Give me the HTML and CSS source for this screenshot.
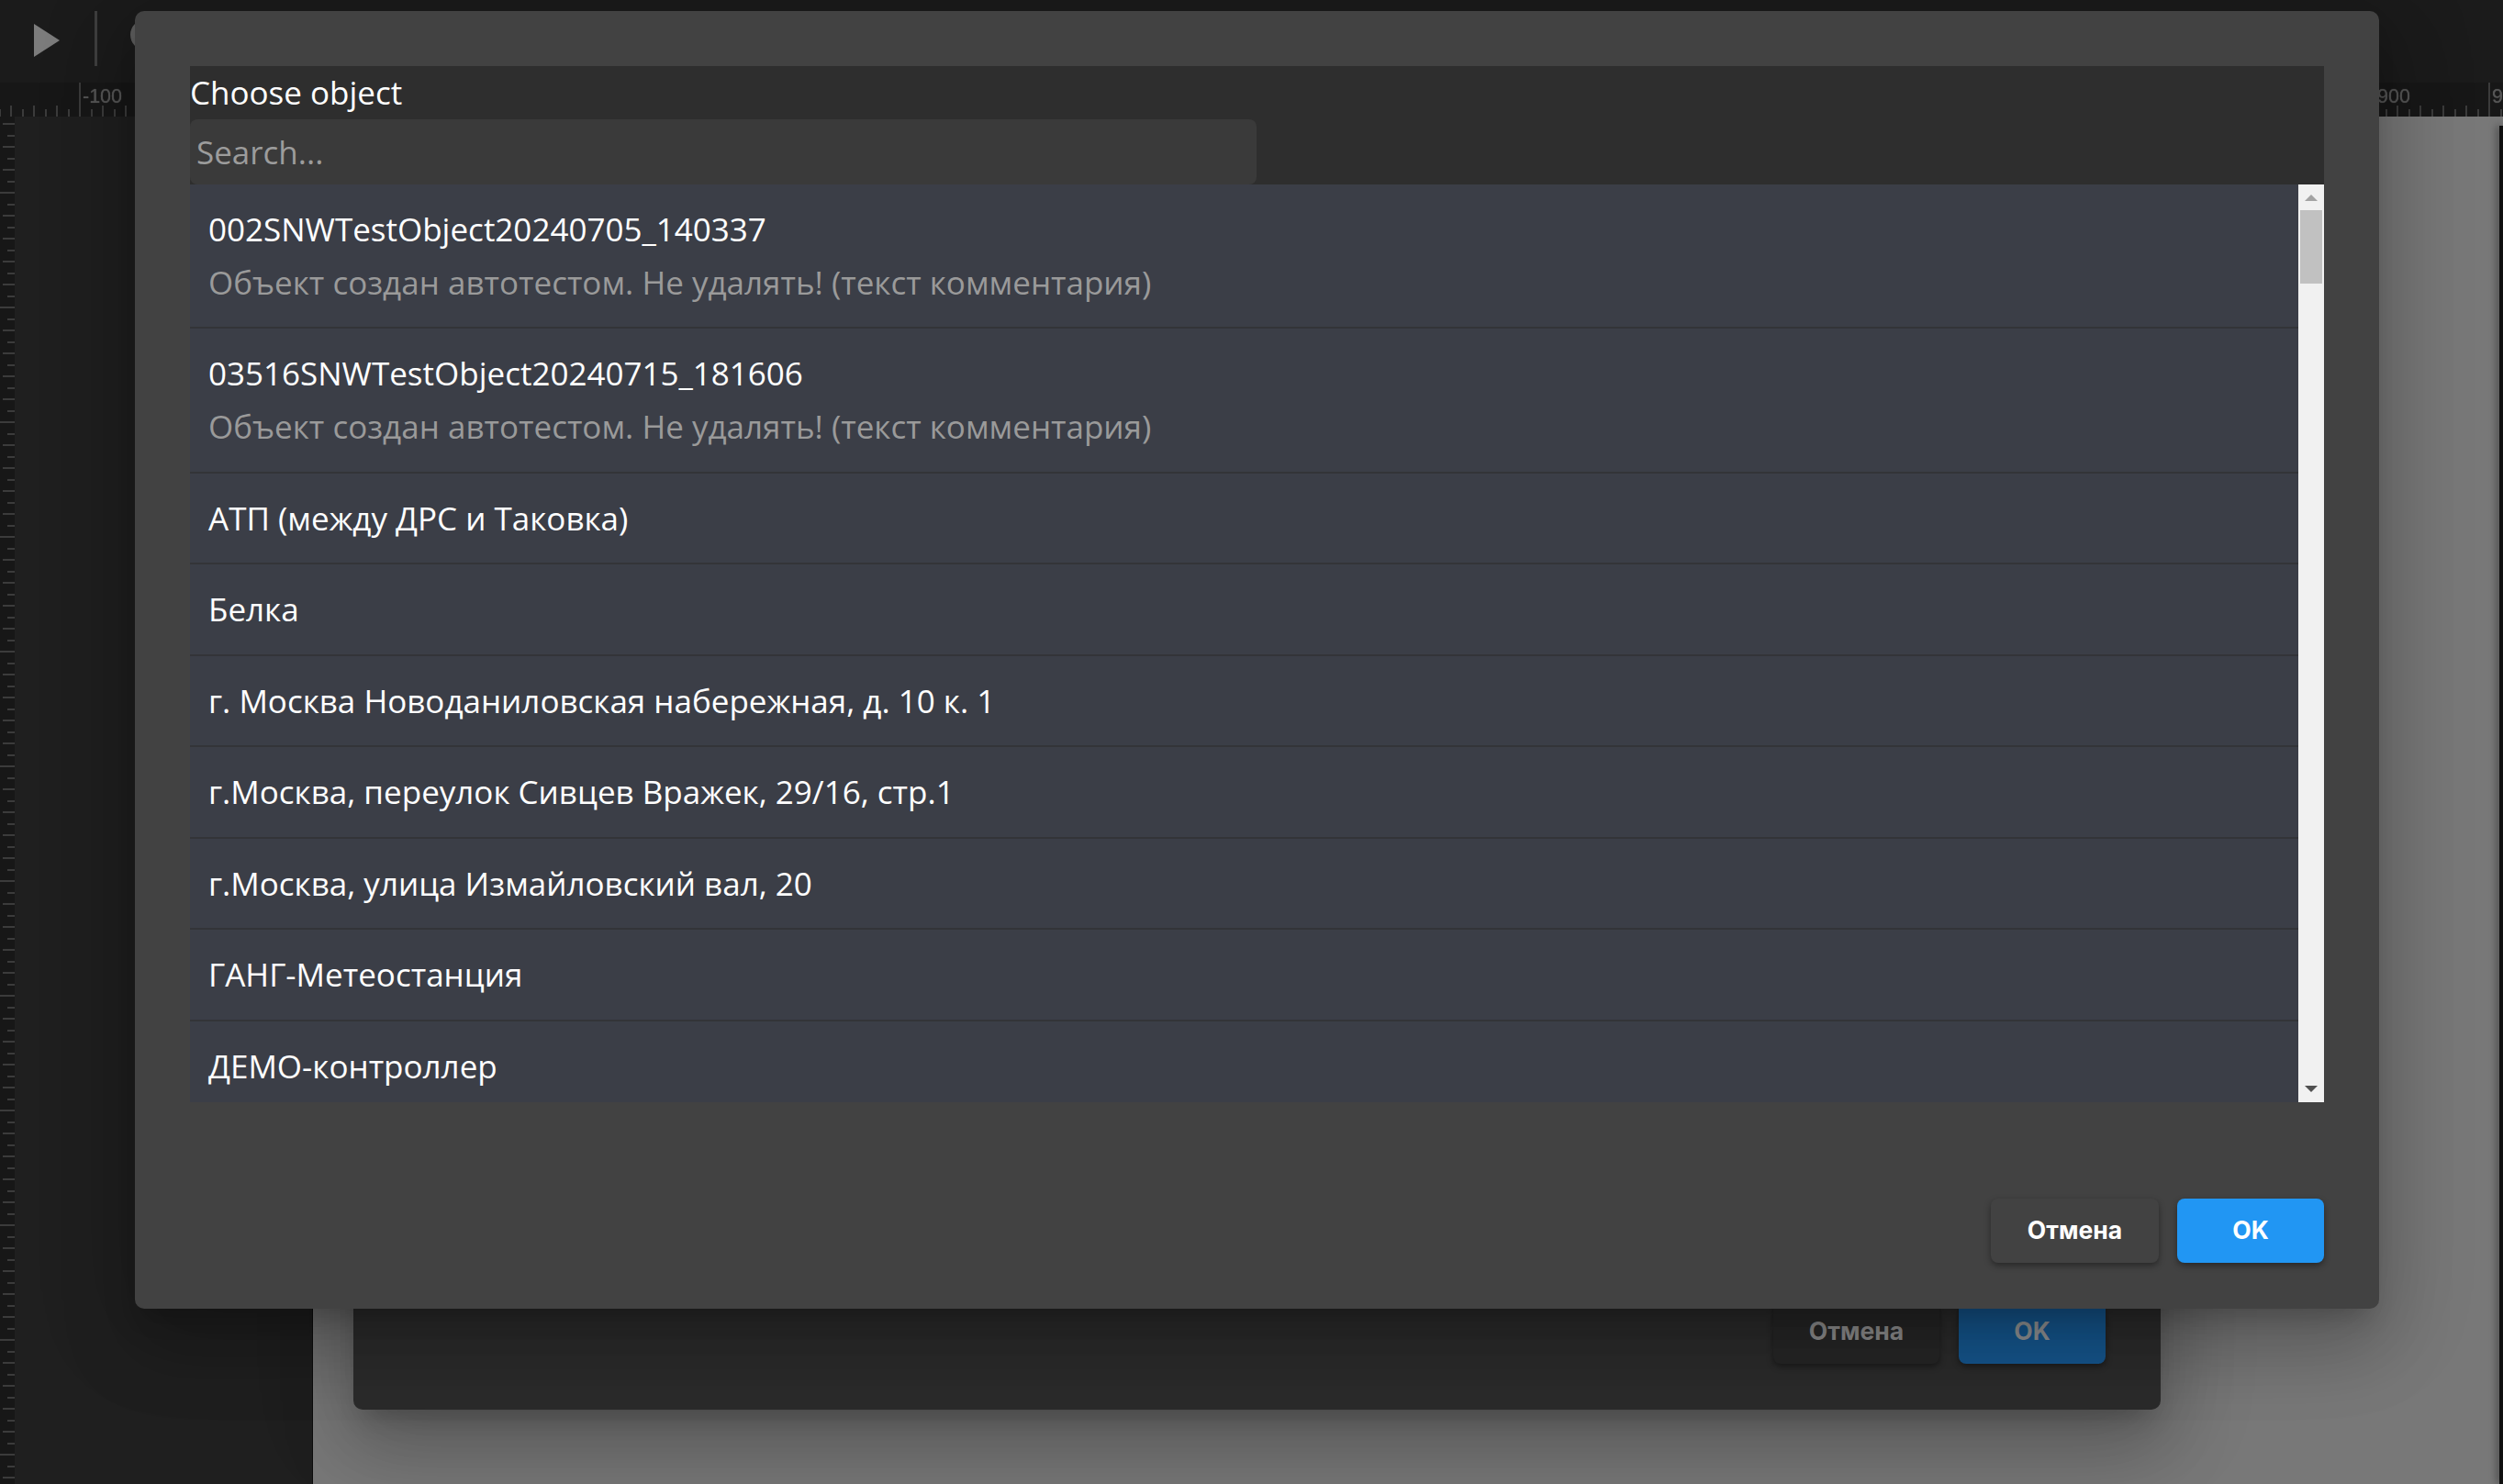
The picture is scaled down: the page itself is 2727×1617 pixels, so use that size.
FILE: index.html
```html
<!DOCTYPE html>
<html lang="ru">
<head>
<meta charset="utf-8">
<title>Choose object</title>
<link rel="stylesheet" href="styles.css">
</head>
<body>
<div class="app">
  <header class="toolbar">
    <svg class="play" viewBox="0 0 28 36" aria-hidden="true"><path d="M0 0 L28 18 L0 36 Z"/></svg>
    <span class="divider"></span>
    <span class="tool-circle"></span>
  </header>
  <div class="ruler-top">
    <span class="ruler-label label-a">-100</span>
    <span class="ruler-label label-b">900</span>
    <span class="ruler-label label-c">9</span>
  </div>
  <main class="workspace">
    <div class="ruler-left"></div>
    <aside class="side-panel"></aside>
    <section class="canvas"><div class="page-edge"></div></section>
  </main>
</div>

<div class="dialog-back">
  <div class="actions actions-dim">
    <button class="btn btn-cancel-dim">Отмена</button>
    <button class="btn btn-ok-dim">OK</button>
  </div>
</div>

<div class="modal">
  <div class="picker-head">
    <div class="picker-title">Choose object</div>
    <input class="search" type="text" placeholder="Search...">
  </div>
  <div class="picker-body">
    <ul class="list">
      <li class="row"><div class="row-title">002SNWTestObject20240705_140337</div><div class="row-note">Объект создан автотестом. Не удалять! (текст комментария)</div></li>
      <li class="row"><div class="row-title">03516SNWTestObject20240715_181606</div><div class="row-note">Объект создан автотестом. Не удалять! (текст комментария)</div></li>
      <li class="row"><div class="row-title">АТП (между ДРС и Таковка)</div></li>
      <li class="row"><div class="row-title">Белка</div></li>
      <li class="row"><div class="row-title">г. Москва Новоданиловская набережная, д. 10 к. 1</div></li>
      <li class="row"><div class="row-title">г.Москва, переулок Сивцев Вражек, 29/16, стр.1</div></li>
      <li class="row"><div class="row-title">г.Москва, улица Измайловский вал, 20</div></li>
      <li class="row"><div class="row-title">ГАНГ-Метеостанция</div></li>
      <li class="row"><div class="row-title">ДЕМО-контроллер</div></li>
    </ul>
    <div class="scrollbar">
      <span class="arrow-up"></span>
      <span class="thumb"></span>
      <span class="arrow-down"></span>
    </div>
  </div>
  <div class="actions modal-actions">
    <button class="btn btn-cancel">Отмена</button>
    <button class="btn btn-ok">OK</button>
  </div>
</div>
</body>
</html>
```
FILE: styles.css
```css
* { box-sizing: border-box; }
html, body { margin: 0; height: 100%; overflow: hidden; background: #1f1f1f; }
body { font-family: "Open Sans", "Noto Sans", sans-serif; color: #fff; }

.app { display: flex; flex-direction: column; height: 1617px; }

.toolbar {
  display: flex; align-items: flex-start; height: 90px; flex: none;
  padding: 12px 0 0 37px; background: #1b1b1b;
}
.play { width: 28px; height: 36px; margin-top: 14px; fill: #7c7c7c; }
.divider { width: 3px; height: 60px; margin-left: 38px; background: #3f3f3f; }
.tool-circle { width: 34px; height: 34px; margin: 9px 0 0 36px; border-radius: 50%; background: #5e5e5e; }

.ruler-top {
  position: relative; height: 37px; flex: none; overflow: hidden; background-color: #171717;
  background-image:
    linear-gradient(to right, #3b3b3b 2px, transparent 2px),
    linear-gradient(to right, #3b3b3b 2px, transparent 2px),
    linear-gradient(to right, #3b3b3b 2px, transparent 2px);
  background-repeat: repeat-x;
  background-size: 125px 100%, 25px 12px, 25px 8px;
  background-position: 86px 0, 36px 100%, 24px 100%;
}
.ruler-label {
  position: absolute; top: 2px; font: 21.5px/26px "Liberation Sans", sans-serif;
  color: #565656; filter: blur(.5px); text-shadow: 0 0 1px #565656;
}
.label-a { left: 90px; }
.label-b { left: 2590px; }
.label-c { left: 2715px; }

.workspace { display: flex; flex: 1; min-height: 0; }
.ruler-left {
  width: 16px; flex: none; background-color: #171717;
  background-image:
    linear-gradient(#3b3b3b 2px, transparent 2px),
    linear-gradient(#3b3b3b 2px, transparent 2px),
    linear-gradient(#3b3b3b 2px, transparent 2px);
  background-repeat: repeat-y;
  background-size: 16px 125px, 13px 25px, 8px 25px;
  background-position: 0 82px, 3px 7px, 8px 20px;
}
.side-panel { width: 325px; flex: none; background: #1f1f1f; border-right: 1px solid #0e0e0e; }
.canvas { flex: 1; display: flex; justify-content: flex-end; padding-top: 10px; background: #787878; }
.page-edge { width: 4px; background: #0f0f0f; box-shadow: -2px 0 8px rgba(0, 0, 0, .6); }

.dialog-back {
  position: absolute; left: 385px; top: 300px; width: 1969px; height: 1236px;
  display: flex; flex-direction: column; justify-content: flex-end;
  padding: 0 60px 50px 0; background: #2b2b2b; border-radius: 10px;
  box-shadow: 0 19px 26px -12px rgba(0, 0, 0, .2), 0 42px 80px 5px rgba(0, 0, 0, .16), 0 16px 100px 14px rgba(0, 0, 0, .14);
}

.modal {
  position: absolute; left: 147px; top: 12px; width: 2445px; height: 1414px;
  display: flex; flex-direction: column; padding: 60px 60px 50px 60px;
  background: #424242; border-radius: 10px;
  box-shadow: 0 19px 26px -12px rgba(0, 0, 0, .2), 0 42px 80px 5px rgba(0, 0, 0, .16), 0 16px 100px 14px rgba(0, 0, 0, .14);
}
.picker-head { flex: none; height: 129px; background: #2e2e2e; }
.picker-title { height: 58px; font-size: 35px; line-height: 58px; }
.search {
  display: block; width: 1162px; height: 71px; padding: 0 7px; border: 0; outline: 0;
  border-radius: 8px; background: #3a3a3a; color: #fff;
  font: 35px "Open Sans", "Noto Sans", sans-serif;
}
.search::placeholder { color: #9c9c9c; opacity: 1; }

.picker-body { display: flex; flex: none; height: 1000px; overflow: hidden; }
.list { flex: 1; margin: 0; padding: 0; list-style: none; overflow: hidden; background: #3b3e47; }
.row { padding: 20px 20px 19.5px; border-bottom: 2px solid #333438; }
.row-title { font-size: 35px; line-height: 58px; }
.row-note { margin-bottom: .8px; font-size: 35px; line-height: 57px; color: #9a9a9a; }

.scrollbar {
  position: relative; flex: none; width: 28px; display: flex; flex-direction: column; align-items: center;
  padding-top: 11px; background: #f1f1f1;
}
.arrow-up { width: 0; height: 0; border: solid transparent; border-width: 0 7px 7px; border-bottom-color: #a3a3a3; }
.thumb { width: 24px; height: 80px; margin-top: 10px; background: #c1c1c1; }
.arrow-down {
  position: absolute; bottom: 11px; left: 7px; width: 0; height: 0;
  border: solid transparent; border-width: 7px 7px 0; border-top-color: #505050;
}

.actions { display: flex; justify-content: flex-end; gap: 20px; }
.actions-dim { gap: 21px; }
.modal-actions { margin-top: auto; }
.btn {
  height: 70px; padding: 0 0 2px; border: 0; border-radius: 8px;
  font: 700 26.5px "Inter", "Liberation Sans", sans-serif;
  box-shadow: 0 3px 7px rgba(0, 0, 0, .4);
}
.btn-cancel { width: 183px; background: #424242; color: #fff; }
.btn-ok { width: 160px; background: #2196f3; color: #fff; }
.btn-cancel-dim { width: 181px; background: #262626; color: #8c8c8c; }
.btn-ok-dim { width: 160px; background: #15558c; color: #8f9193; }
```
